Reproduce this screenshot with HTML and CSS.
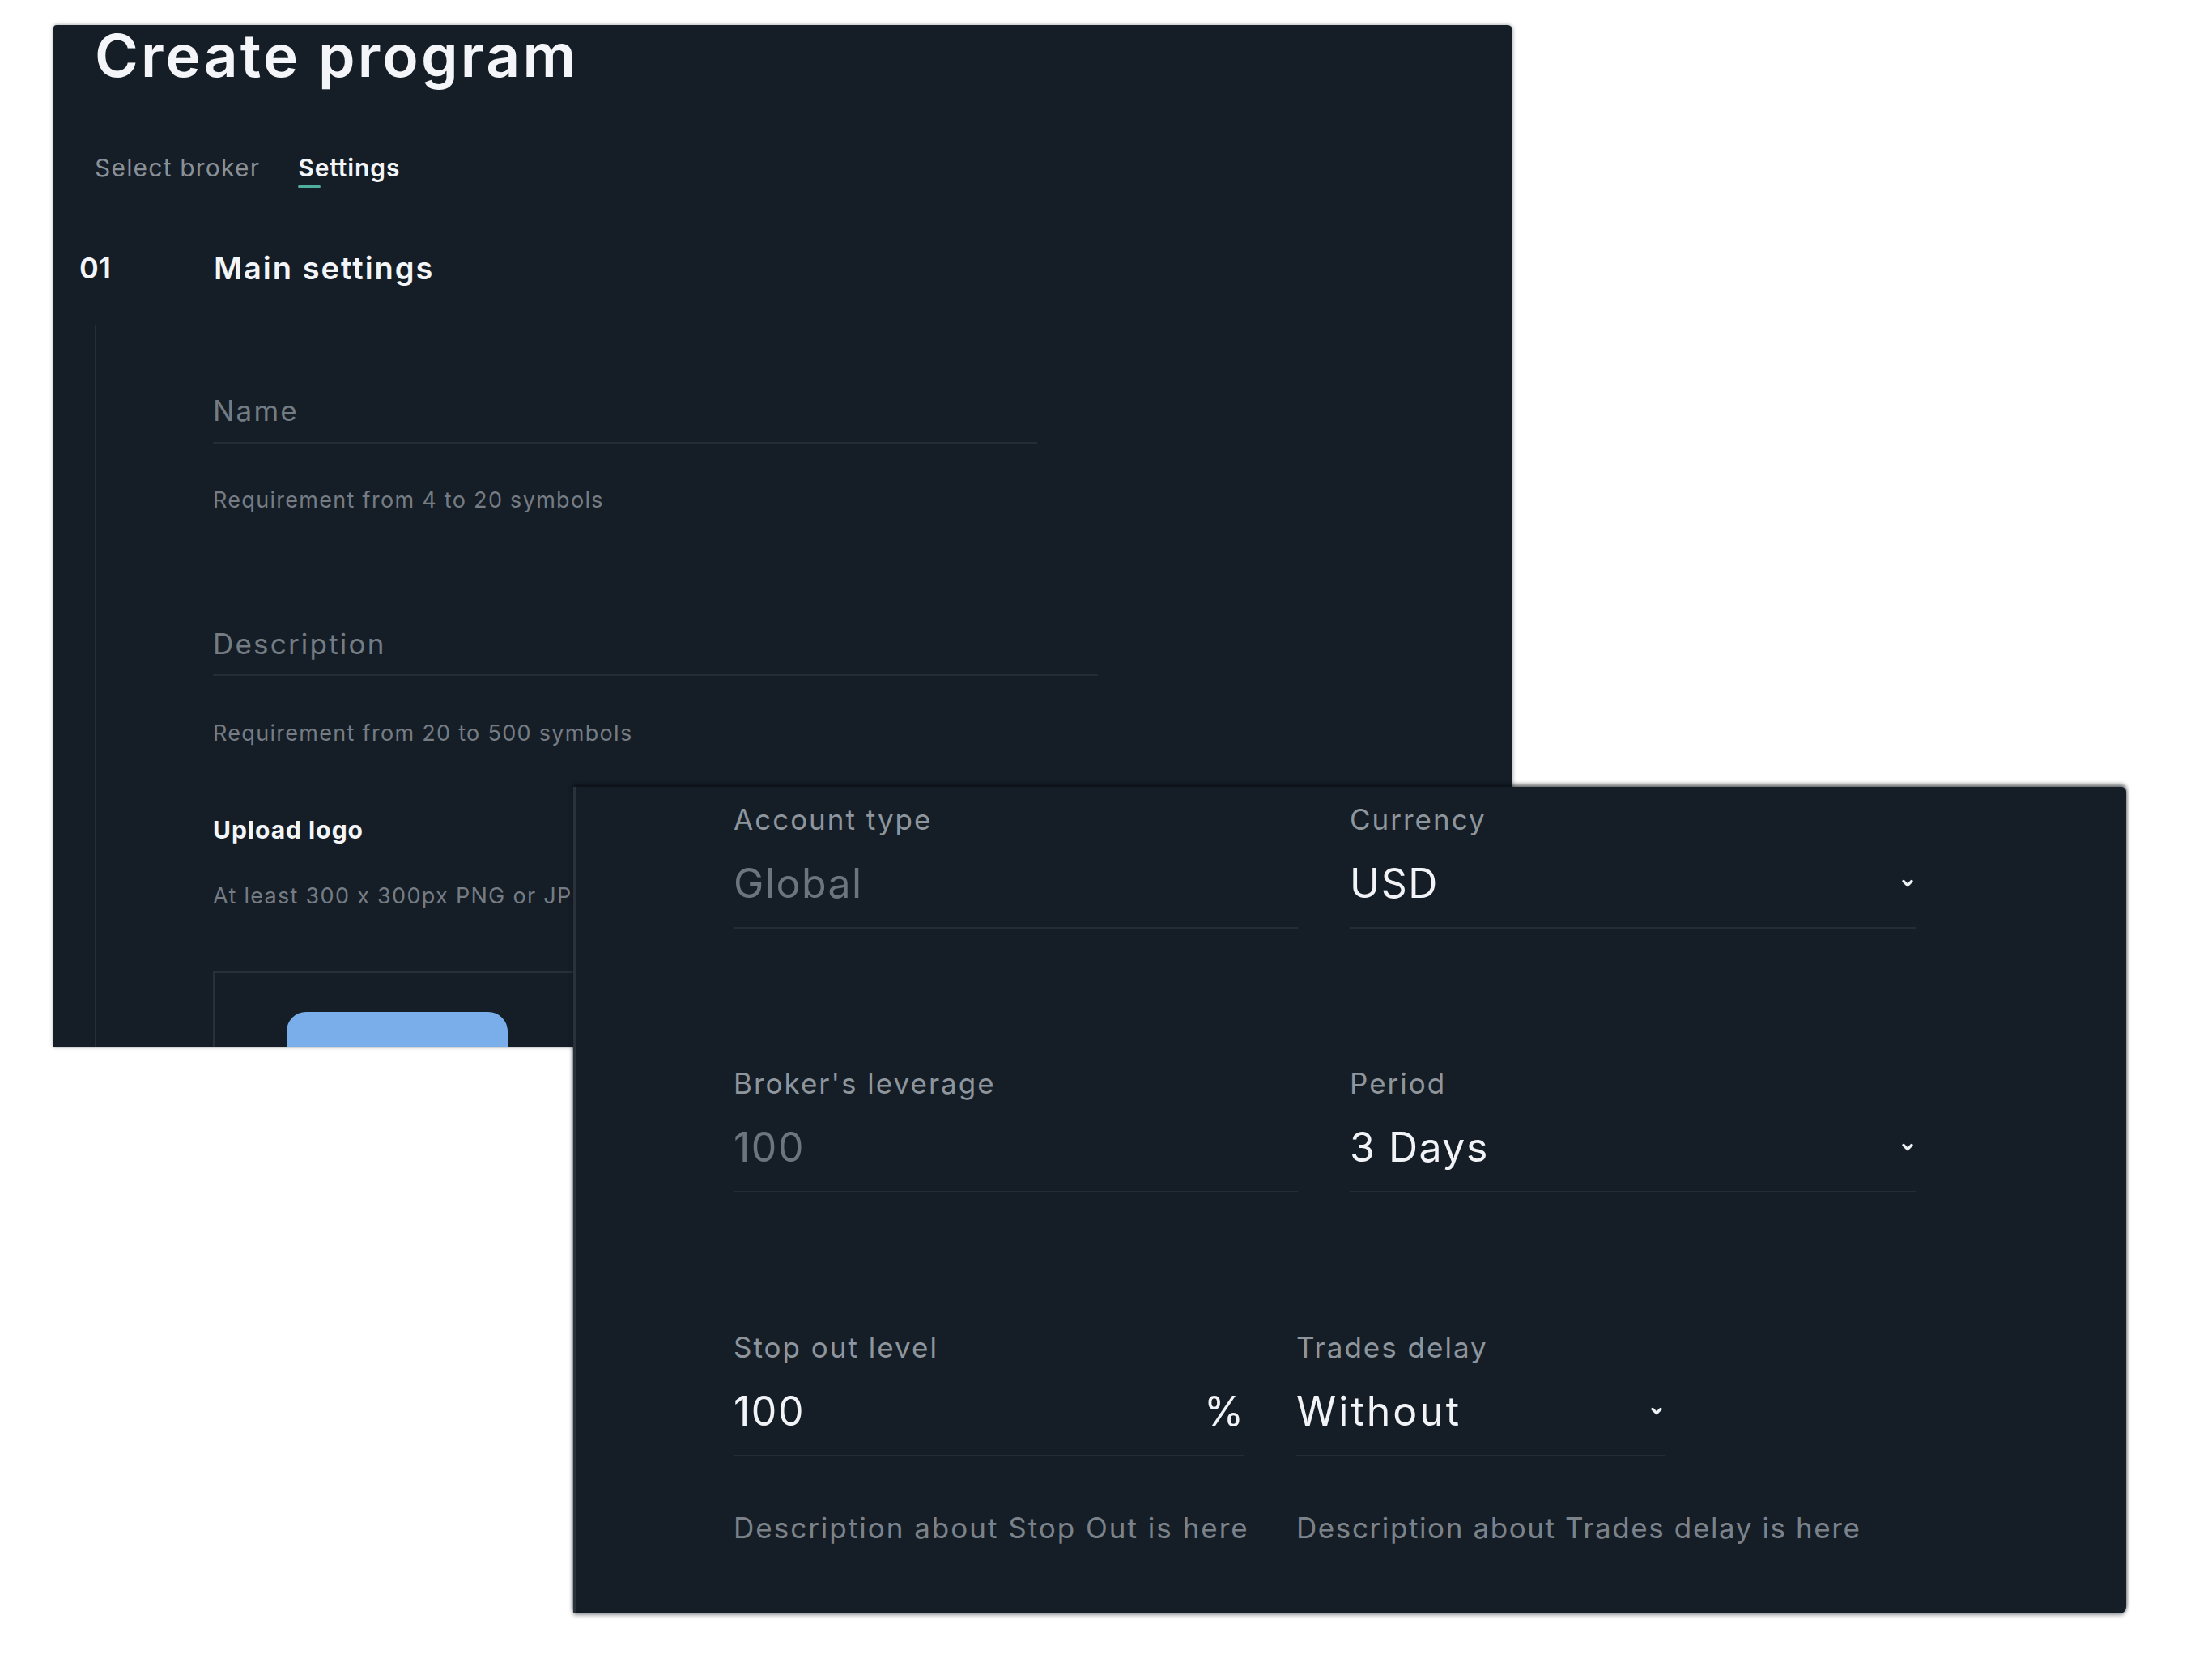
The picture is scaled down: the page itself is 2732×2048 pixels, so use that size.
FILE: index.html
```html
<!DOCTYPE html>
<html lang="en">
<head>
<meta charset="utf-8">
<title>Create program</title>
<link rel="stylesheet" href="styles.css">
</head>
<body>
<div class="canvas">
  <section class="panel panel-main">
    <h1 class="title">Create program</h1>
    <nav class="tabs">
      <span class="tab">Select broker</span>
      <span class="tab tab-active">Settings</span>
    </nav>
    <div class="step-head">
      <span class="step-num">01</span>
      <span class="step-title">Main settings</span>
    </div>
    <div class="step-body">
      <div class="text-field field-name">
        <div class="input-line"><span class="placeholder">Name</span></div>
        <p class="hint">Requirement from 4 to 20 symbols</p>
      </div>
      <div class="text-field field-desc">
        <div class="input-line"><span class="placeholder">Description</span></div>
        <p class="hint">Requirement from 20 to 500 symbols</p>
      </div>
      <div class="upload">
        <h3 class="upload-title">Upload logo</h3>
        <p class="hint upload-hint">At least 300 x 300px PNG or JPG</p>
        <div class="upload-box">
          <div class="upload-btn"></div>
        </div>
      </div>
    </div>
  </section>

  <section class="panel panel-settings">
    <div class="row row-wide">
      <div class="field">
        <div class="label">Account type</div>
        <div class="control"><span class="value value-muted">Global</span></div>
      </div>
      <div class="field">
        <div class="label">Currency</div>
        <div class="control">
          <span class="value">USD</span>
          <svg class="chevron" viewBox="0 0 18 12" width="18" height="12"><path d="M4 3.5l5 5 5-5" fill="none" stroke="#eef1f4" stroke-width="3.4" stroke-linecap="round" stroke-linejoin="round"/></svg>
        </div>
      </div>
    </div>
    <div class="row row-wide">
      <div class="field">
        <div class="label">Broker's leverage</div>
        <div class="control"><span class="value value-muted">100</span></div>
      </div>
      <div class="field">
        <div class="label">Period</div>
        <div class="control">
          <span class="value">3 Days</span>
          <svg class="chevron" viewBox="0 0 18 12" width="18" height="12"><path d="M4 3.5l5 5 5-5" fill="none" stroke="#eef1f4" stroke-width="3.4" stroke-linecap="round" stroke-linejoin="round"/></svg>
        </div>
      </div>
    </div>
    <div class="row row-narrow">
      <div class="field field-stop">
        <div class="label">Stop out level</div>
        <div class="control">
          <span class="value">100</span>
          <span class="value unit">%</span>
        </div>
        <p class="desc">Description about Stop Out is here</p>
      </div>
      <div class="field field-delay">
        <div class="label">Trades delay</div>
        <div class="control">
          <span class="value value-wide">Without</span>
          <svg class="chevron" viewBox="0 0 18 12" width="18" height="12"><path d="M4 3.5l5 5 5-5" fill="none" stroke="#eef1f4" stroke-width="3.4" stroke-linecap="round" stroke-linejoin="round"/></svg>
        </div>
        <p class="desc desc-tight">Description about Trades delay is here</p>
      </div>
    </div>
  </section>
</div>
</body>
</html>
```

FILE: styles.css
```css
* {
  box-sizing: border-box;
}

html, body {
  margin: 0;
  padding: 0;
  background: #ffffff;
}

body {
  font-family: "Inter", "Open Sans", "Liberation Sans", sans-serif;
  color: #eef1f4;
  letter-spacing: 1px;
}

.canvas {
  position: relative;
  width: 2732px;
  height: 2048px;
  overflow: hidden;
  padding: 31px 0 0 66px;
}

.panel {
  background: #151e27;
}

/* ---------- first screen ---------- */
.panel-main {
  width: 1802px;
  height: 1262px;
  padding: 1px 0 0 32px;
  border-radius: 4px 6px 0 0;
  box-shadow: 0 0 5px rgba(20, 28, 36, 0.45);
}

.title {
  margin: 0 0 0 19px;
  font-size: 73px;
  line-height: 73px;
  font-weight: 600;
  letter-spacing: 3.2px;
  color: #f3f5f8;
}

.tabs {
  display: flex;
  align-items: flex-start;
  gap: 47px;
  margin: 84px 0 0 19px;
}

.tab {
  font-size: 30px;
  line-height: 36px;
  color: #8a9098;
  letter-spacing: 1.2px;
}

.tab-active {
  color: #f3f5f8;
  font-weight: 600;
  letter-spacing: 0.9px;
}

.tab-active::after {
  content: "";
  display: block;
  width: 28px;
  height: 3px;
  margin-top: 4px;
  background: #4fae9f;
  border-radius: 2px;
}

.step-head {
  display: flex;
  align-items: center;
  margin-top: 77px;
  height: 44px;
}

.step-num {
  width: 166px;
  font-size: 36px;
  font-weight: 600;
  letter-spacing: 0;
  color: #f3f5f8;
}

.step-title {
  font-size: 38px;
  font-weight: 600;
  letter-spacing: 2px;
  color: #f3f5f8;
}

.step-body {
  margin: 49px 0 0 19px;
  border-left: 2px solid #262f38;
  padding: 85px 0 0 144px;
  height: 891px;
}

.text-field .input-line {
  padding-bottom: 19px;
  border-bottom: 2px solid #232c35;
}

.placeholder {
  display: block;
  font-size: 35px;
  line-height: 40px;
  letter-spacing: 2.2px;
  color: #737b83;
}

.field-name .input-line {
  width: 1018px;
}

.field-desc {
  margin-top: 140px;
}

.field-desc .input-line {
  width: 1093px;
  padding-bottom: 18px;
}

.hint {
  margin: 53px 0 0;
  font-size: 27px;
  line-height: 34px;
  letter-spacing: 1.3px;
  color: #757c84;
}

.field-desc .hint {
  margin-top: 54px;
}

.upload {
  margin-top: 84px;
}

.upload-title {
  margin: 0;
  font-size: 30px;
  line-height: 36px;
  font-weight: 700;
  letter-spacing: 1px;
  color: #f3f5f8;
}

.upload-hint {
  margin-top: 47px;
  white-space: nowrap;
}

.upload-box {
  margin-top: 76px;
  width: 1300px;
  height: 93px;
  overflow: hidden;
  border: 2px solid #283139;
  border-bottom: 0;
  padding: 48px 0 0 89px;
}

.upload-btn {
  width: 273px;
  height: 120px;
  background: #7aaeea;
  border-radius: 24px 24px 0 0;
}

/* ---------- overlay screen ---------- */
.panel-settings {
  position: absolute;
  left: 708px;
  top: 972px;
  width: 1918px;
  height: 1021px;
  border-left: 3px solid #29323b;
  border-radius: 0 6px 8px 2px;
  padding: 18px 0 0 195px;
  box-shadow: 0 -3px 5px rgba(4, 8, 12, 0.6), 0 2px 5px rgba(40, 48, 56, 0.5);
}

.row {
  display: flex;
  gap: 64px;
}

.row + .row {
  margin-top: 169px;
}

.row-wide .field:first-child { width: 697px; }
.row-wide .field:last-child { width: 699px; }
.row-narrow .field-stop { width: 631px; }
.row-narrow .field-delay { width: 455px; }

.label {
  font-size: 35px;
  line-height: 44px;
  letter-spacing: 2px;
  color: #8e959c;
}

.control {
  display: flex;
  align-items: center;
  justify-content: space-between;
  margin-top: 27px;
  height: 86px;
  padding: 0 1px 24px 0;
  border-bottom: 2px solid #242d36;
}

.value {
  font-size: 50px;
  line-height: 60px;
  letter-spacing: 1.5px;
  color: #f1f3f6;
}

.value-wide {
  letter-spacing: 3px;
}

.value-muted {
  color: #6c747c;
}

.unit {
  letter-spacing: 0;
}

.chevron {
  display: block;
  flex: none;
}

.desc {
  margin: 66px 0 0;
  font-size: 35px;
  line-height: 44px;
  letter-spacing: 2px;
  white-space: nowrap;
  color: #7b828a;
}

.desc-tight {
  letter-spacing: 1.6px;
}
```
